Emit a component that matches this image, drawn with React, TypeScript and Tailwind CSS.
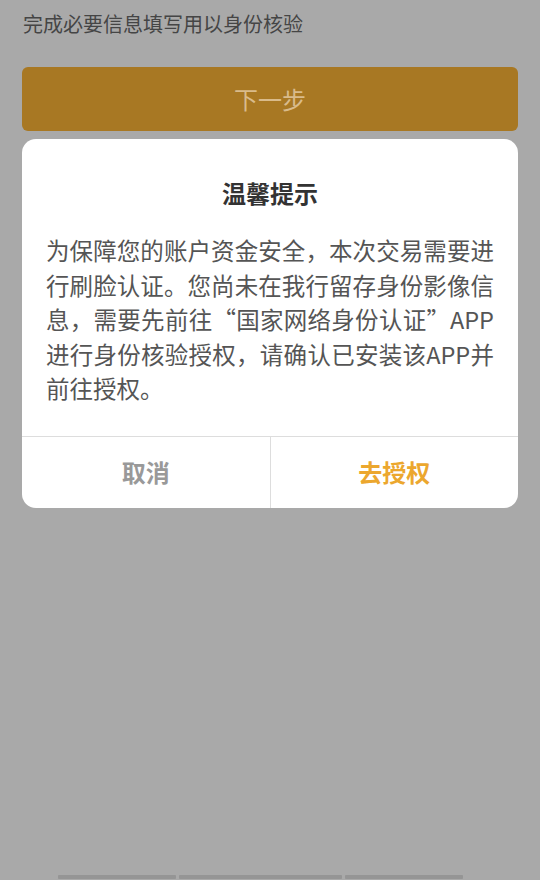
import React from "react";

const font = { fontFamily: '"Noto Sans CJK SC", "Noto Sans", sans-serif' };

export default function App() {
  const lines = [
    "为保障您的账户资金安全，本次交易需要进",
    "行刷脸认证。您尚未在我行留存身份影像信",
    "息，需要先前往“国家网络身份认证”APP",
    "进行身份核验授权，请确认已安装该APP并",
    "前往授权。",
  ];
  return (
    <div style={font} className="w-[540px] h-[880px] bg-[#a9a9a9] flex flex-col overflow-hidden">
      <div className="pl-[23px] pt-[8px] h-[32px] text-[20px] leading-[32px] text-[#454545]">
        完成必要信息填写用以身份核验
      </div>
      <div className="mt-[35px] mx-[22px] h-[64px] rounded-[6px] bg-[#a87823] flex items-center justify-center text-[24px] text-[#d9bb8b]">
        下一步
      </div>
      <div className="mt-[8px] mx-[22px] bg-white rounded-[14px] flex flex-col overflow-hidden">
        <div className="pt-[40px] text-center text-[24px] leading-[28px] font-bold text-[#333333]">
          温馨提示
        </div>
        <div className="mt-[26px] pb-[30px] px-[24px] text-[23.5px] leading-[34.5px] text-[#555555]">
          {lines.map((l, i) => (
            <div key={i} className={i < 4 ? "whitespace-nowrap text-justify [text-align-last:justify]" : "whitespace-nowrap"}>
              {l}
            </div>
          ))}
        </div>
        <div className="h-[72px] border-t border-[#dddddd] flex">
          <div className="flex-1 flex items-center justify-center text-[24px] font-bold text-[#999999] border-r border-[#dddddd]">
            取消
          </div>
          <div className="flex-1 flex items-center justify-center text-[24px] font-bold text-[#eca72e]">
            去授权
          </div>
        </div>
      </div>
      <div className="flex-1" />
      <div className="h-[4px] mb-[1px] flex gap-[3px] pl-[58px]">
        <div className="w-[118px] bg-[#959595] rounded-[1px]" />
        <div className="w-[163px] bg-[#959595] rounded-[1px]" />
        <div className="w-[118px] bg-[#959595] rounded-[1px]" />
      </div>
    </div>
  );
}
